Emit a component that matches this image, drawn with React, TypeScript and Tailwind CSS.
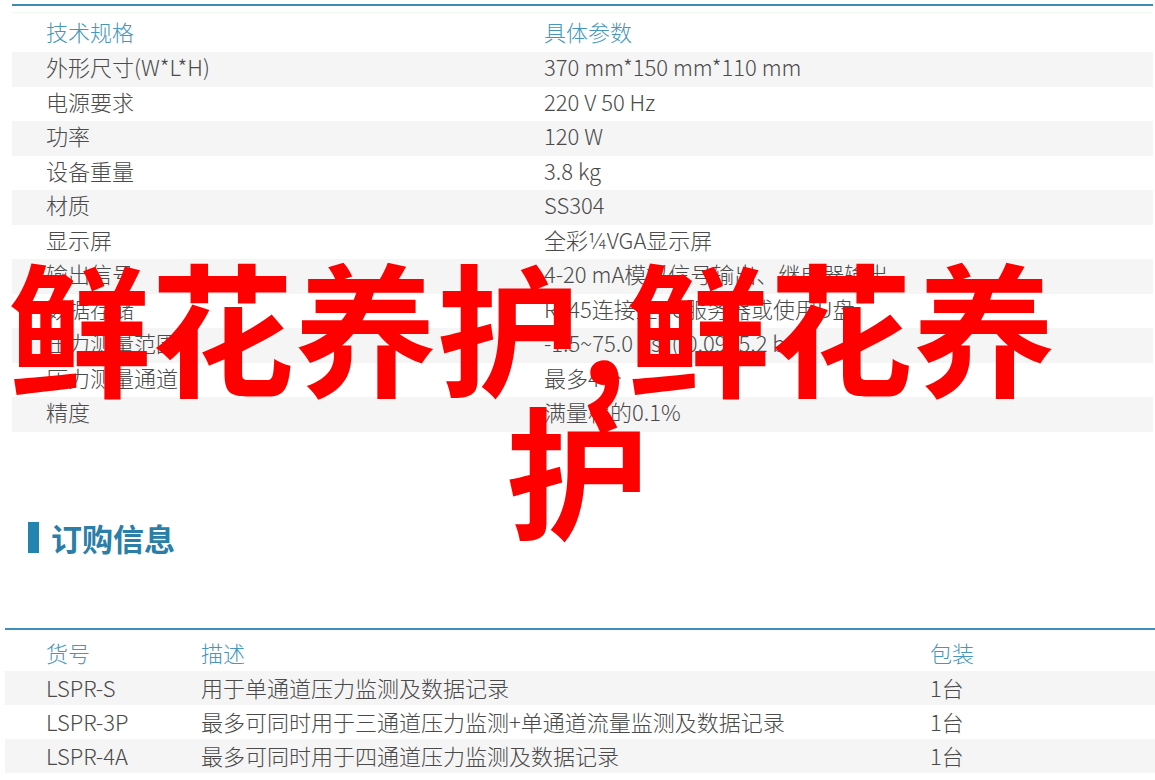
const specs = [
  ["外形尺寸(W*L*H)", "370 mm*150 mm*110 mm"],
  ["电源要求", "220 V 50 Hz"],
  ["功率", "120 W"],
  ["设备重量", "3.8 kg"],
  ["材质", "SS304"],
  ["显示屏", "全彩¼VGA显示屏"],
  ["输出信号", "4-20 mA模拟信号输出、继电器输出"],
  ["数据存储", "RJ45连接至PC服务器或使用U盘"],
  ["压力测量范围", "-1.5~75.0 psi (-0.09~5.2 bar)"],
  ["压力测量通道", "最多4个"],
  ["精度", "满量程的0.1%"],
];

const orders = [
  ["LSPR-S", "用于单通道压力监测及数据记录", "1台"],
  ["LSPR-3P", "最多可同时用于三通道压力监测+单通道流量监测及数据记录", "1台"],
  ["LSPR-4A", "最多可同时用于四通道压力监测及数据记录", "1台"],
];

const App = () => {
  return (
    <div className="relative w-[1155px] h-[780px] overflow-hidden bg-white font-['Noto_Sans_CJK_SC','Noto_Sans',sans-serif] text-[22px] font-light text-[#4a4a4a]">
      {/* spec table */}
      <div className="pt-[4px] ml-[12px] mr-[2px]">
        <div className="h-[2px] bg-[#3b8db2]" />
        <div className="h-[1px] mt-[6px] bg-[#eefaee]" />
        <div className="grid grid-cols-[532px_1fr] h-[39px] pb-[2px] items-center text-[#4796bb]">
          <div className="pl-[34px]">技术规格</div>
          <div>具体参数</div>
        </div>
        {specs.map((row, i) => (
          <div
            key={row[0]}
            className={`grid grid-cols-[532px_1fr] h-[34.5px] pb-[7px] items-center leading-[28px] ${i % 2 === 0 ? "bg-[#f5f5f5]" : "bg-white"}`}
          >
            <div className="pl-[34px]">{row[0]}</div>
            <div>{row[1]}</div>
          </div>
        ))}
      </div>

      {/* order heading */}
      <div className="mt-[90px] ml-[28px] flex items-center gap-[12px]">
        <div className="w-[11px] h-[31px] bg-[#2384b0]" />
        <div className="text-[31px] leading-[31px] font-bold text-[#2a7ea8]">订购信息</div>
      </div>

      {/* order table */}
      <div className="mt-[75px] ml-[5px]">
        <div className="h-[2px] bg-[#3d8fb7]" />
        <div className="grid grid-cols-[196px_729px_1fr] h-[41px] pt-[5px] items-center text-[#4796bb]">
          <div className="pl-[41px]">货号</div>
          <div>描述</div>
          <div>包装</div>
        </div>
        {orders.map((row, i) => (
          <div
            key={row[0]}
            className={`grid grid-cols-[196px_729px_1fr] h-[34px] pb-[2px] items-center ${i % 2 === 0 ? "bg-[#f5f5f5]" : "bg-white"}`}
          >
            <div className="pl-[41px]">{row[0]}</div>
            <div>{row[1]}</div>
            <div>{row[2]}</div>
          </div>
        ))}
      </div>

      {/* big red title over the page */}
      <div className="absolute top-[252px] left-0 w-full font-bold text-[143px] leading-none text-[#ff0000]">
        <div className="whitespace-nowrap pl-[8px]">鲜花养护,鲜花养</div>
        <div className="text-center">护</div>
      </div>
    </div>
  );
};

export default App;
